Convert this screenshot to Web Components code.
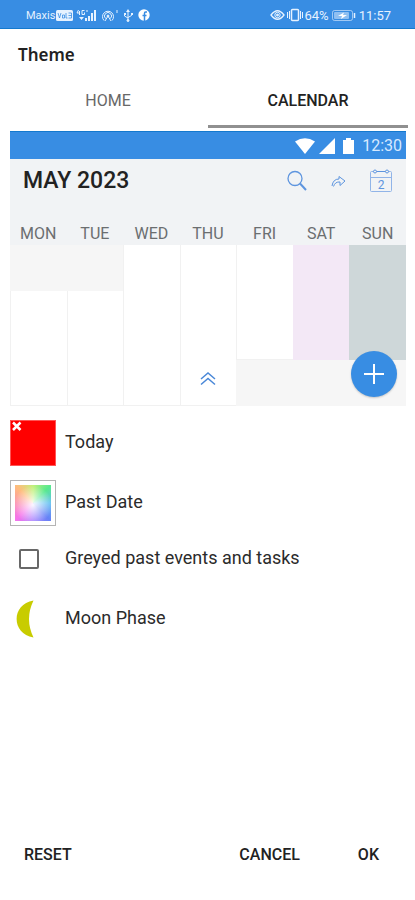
<!DOCTYPE html>
<html lang="en">
<head>
<meta charset="utf-8">
<meta name="viewport" content="width=device-width, initial-scale=1">
<title>Theme</title>
<style>
html, body { margin: 0; background: #fff; }
body { font-family: Roboto, "Noto Sans", sans-serif; color: #222; --blue: #388de3; }
</style>
</head>
<body>
<theme-screen></theme-screen>
<script>
const define = (name, html, setup) => {
  const template = document.createElement("template");
  template.innerHTML = html;
  customElements.define(name, class extends HTMLElement {
    constructor() {
      super();
      this.attachShadow({ mode: "open" }).append(template.content.cloneNode(true));
    }
    connectedCallback() { if (setup) setup(this, this.shadowRoot); }
  });
};

define("status-bar", `
<style>
:host { display: flex; justify-content: space-between; align-items: center; height: 29px; box-sizing: border-box; padding: 2px 24px 0 26px; background: var(--blue); border-bottom: 1px solid #1479ce; color: #e6f2ff; }
div { display: flex; align-items: center; }
.left { font-size: 11px; }
.right { font-size: 13px; }
svg { display: block; fill: none; stroke: currentColor; }
.volte { margin-left: 1px; }
.net { margin-left: 3px; }
.spot { margin-left: 4px; }
.usb { margin-left: 4px; }
.fb { margin-left: 5px; }
.vib { margin: 0 1px 0 2px; }
.bat { margin: 0 3px; }
</style>
<div class="left">
  <span>Maxis</span>
  <svg class="volte" width="17" height="11" viewBox="0 0 17 11"><rect width="17" height="11" rx="1.500" fill="currentColor" stroke="none"/><path d="M2 3l1.500 5 1.500-5M6.500 5h2v3h-2zM10 3v5h1.500M12.500 3h3v5h-3M12.500 5.500h3" stroke="#388de3" stroke-width=".8"/></svg>
  <svg class="net" width="21" height="13" viewBox="0 0 21 13"><path d="M2.500 1L1 4h3M3.500 2v4M8.500 1.500H6v4h2.500v-2M10 2h2" stroke-width="1"/><path d="M3 8h5L5.500 11zM9 9h2v3H9zM12 7h2v5h-2zM15 4h2v8h-2zM18 1h2v11h-2z" fill="currentColor" stroke="none"/></svg>
  <svg class="spot" width="18" height="13" viewBox="0 0 18 13"><path d="M3 11.500A5.500 5.500 0 1 1 11 11.500M4.500 9.500A3.500 3.500 0 1 1 9.500 9.500M4 12l3-5 3 5M16 1v3"/><circle cx="7" cy="7" r="1" fill="currentColor"/></svg>
  <svg class="usb" width="10" height="13" viewBox="0 0 10 13"><path d="M5 2v9M1.500 5v2L5 9M8.500 4.500v2L5 8.500"/><path d="M5 0L3 3h4zM1 4h2v2H1zM8 4h2v2H8z" fill="currentColor" stroke="none"/><circle cx="5" cy="11.500" r="1" fill="currentColor"/></svg>
  <svg class="fb" width="12" height="12" viewBox="0 0 12 12"><circle cx="6" cy="6" r="5.700" fill="#fff" stroke="none"/><path d="M9 3H7.500Q6.500 3 6.500 4.200V12M4.500 6.500h4" stroke="#388de3" stroke-width="1.500"/></svg>
</div>
<div class="right">
  <svg width="15" height="12" viewBox="0 0 15 12"><path d="M1 6Q7.500-2.500 14 6 7.500 14.500 1 6z" stroke-width="1.300"/><circle cx="7.500" cy="6" r="2.700"/><circle cx="7.500" cy="6" r="1" fill="currentColor"/></svg>
  <svg class="vib" width="16" height="14" viewBox="0 0 16 14"><rect x="4.500" y="1.500" width="7" height="11" rx="1" stroke-width="1.500"/><path d="M2.500 3v8M13.500 3v8M.5 4v6M15.500 4v6"/></svg>
  <span>64%</span>
  <svg class="bat" width="24" height="11" viewBox="0 0 24 11"><rect x=".5" y=".5" width="20" height="10" rx="2" opacity=".6"/><rect x="2" y="2" width="15" height="7" rx="1" fill="currentColor" stroke="none" opacity=".5"/><path d="M6 6l6-3.500-1 2.500h4L9 9l1-3z" fill="#fff" stroke="none"/><path d="M22.500 3v5" stroke-width="1.500"/></svg>
  <span>11:57</span>
</div>`);

define("theme-tabs", `
<style>
:host { display: grid; grid-template-columns: 1fr 1fr; height: 52px; margin: 0 7px 0 8px; }
button { font: 400 16px Roboto, sans-serif; color: #686868; background: none; border: 0; border-bottom: 3px solid transparent; padding: 0; height: 52px; }
button[aria-selected=true] { color: #222; font-weight: 500; border-bottom-color: #909090; }
</style>
<button role="tab" aria-selected="false">HOME</button>
<button role="tab" aria-selected="true">CALENDAR</button>`,
(el, root) => {
  const tabs = root.querySelectorAll("button");
  tabs.forEach(t => t.onclick = () => tabs.forEach(o => o.setAttribute("aria-selected", o === t)));
});

define("day-column", `
<style>
:host { display: flex; flex-direction: column; min-width: 0; }
.name { height: 26px; line-height: 29px; text-align: center; font-size: 16px; color: #6b6e70; }
.cells { flex: 1; background: #f6f6f6; display: flex; flex-direction: column; }
.fill { flex: 1; box-sizing: border-box; background: var(--fill, #fff); border: solid #f1f1f1; border-width: var(--lines, 0 0 1px 1px); margin: var(--inset, 0); display: flex; align-items: flex-end; justify-content: center; }
</style>
<div class="name"></div>
<div class="cells"><div class="fill"><slot></slot></div></div>`,
(el, root) => { root.querySelector(".name").textContent = el.getAttribute("name"); });

define("calendar-preview", `
<style>
:host { display: block; position: relative; margin: 3px 9px 0 10px; background: #f1f3f5; }
svg { display: block; fill: none; stroke: #5e95df; }
.bar { height: 28px; box-sizing: border-box; border-top: 1px solid #1479ce; padding: 0 4px; background: var(--blue); color: #d6e9ff; display: flex; align-items: center; justify-content: flex-end; gap: 8px; font-size: 16px; }
.bar svg { fill: #fff; stroke: none; }
.bar .wifi { margin-right: -4px; }
.head { display: flex; align-items: center; height: 44px; padding: 0 14px 0 13px; }
h2 { flex: 1; margin: 0; font-size: 23px; line-height: 28px; font-weight: 500; color: #222; }
.head button { background: none; border: 0; padding: 0; }
.tools { display: flex; align-items: center; gap: 24px; height: 24px; }
.tools svg text { font: 12px Roboto, sans-serif; fill: #5e95df; stroke: none; }
.week { display: grid; grid-template-columns: repeat(7, 1fr); height: 187px; padding-top: 16px; }
.late { --inset: 46px 0 0; }
.early { --inset: 0 0 46px; }
.sat { --fill: #f3e8f6; --lines: 0; }
.sun { --fill: #ced7d9; --lines: 0; }
.up { stroke: #4a88d8; margin-bottom: 19px; }
.add { position: absolute; right: 9px; bottom: 9px; width: 46px; height: 46px; border: 0; padding: 0; border-radius: 50%; background: var(--blue); box-shadow: 0 1px 2px #0003; display: grid; place-items: center; }
.add svg { stroke: #fff; stroke-width: 2; }
</style>
<div class="bar">
  <svg class="wifi" width="20" height="16" viewBox="0 0 20 16"><path d="M0 3.500Q10-3 20 3.500L10 16z"/></svg>
  <svg width="16" height="16" viewBox="0 0 16 16"><path d="M16 0v16H0z"/></svg>
  <svg width="11" height="16" viewBox="0 0 11 16"><path d="M3 0h5v2h3v14H0V2h3z"/></svg>
  <span>12:30</span>
</div>
<div class="head">
  <h2>MAY 2023</h2>
  <div class="tools">
    <button aria-label="Search"><svg width="20" height="22" viewBox="0 0 20 22"><circle cx="8" cy="8.500" r="7" stroke-width="1.300"/><path d="M13 13.500l6 6.500" stroke-width="2"/></svg></button>
    <button aria-label="Share"><svg width="15" height="13" viewBox="0 0 15 13"><path d="M1 11Q2 4 8 4V1.500L14 6l-5 4.500V7Q4 6.500 2.500 11.500"/></svg></button>
    <button aria-label="Go to date"><svg width="22" height="24" viewBox="0 0 22 24"><rect x=".5" y="2.500" width="21" height="20" rx="1" stroke="#91b4e8"/><path d="M.5 8.500h21" stroke="#91b4e8"/><path d="M7 2.500h8" /><circle cx="5" cy="2.500" r="1.500" fill="#f1f3f5"/><circle cx="17" cy="2.500" r="1.500" fill="#f1f3f5"/><text x="11" y="20" text-anchor="middle">2</text></svg></button>
  </div>
</div>
<div class="week">
  <day-column class="late" name="MON"></day-column>
  <day-column class="late" name="TUE"></day-column>
  <day-column name="WED"></day-column>
  <day-column name="THU"><svg class="up" width="16" height="15" viewBox="0 0 16 15"><path d="M1 8l7-6 7 6M1 13.500l7-6 7 6" stroke-width="1.500"/></svg></day-column>
  <day-column class="early" name="FRI"></day-column>
  <day-column class="early sat" name="SAT"></day-column>
  <day-column class="early sun" name="SUN"></day-column>
</div>
<button class="add" aria-label="Add"><svg width="20" height="20" viewBox="0 0 20 20"><path d="M10 0v20M0 10h20"/></svg></button>`);

define("option-row", `
<style>
:host { display: block; }
label { display: grid; grid-template-columns: 46px 1fr; column-gap: 9px; align-items: center; height: 60px; padding: 0 10px; font-size: 18px; line-height: 24px; color: #2b2b2b; }
.text { padding-bottom: 2px; }
</style>
<label><slot name="control"></slot><span class="text"></span></label>`,
(el, root) => {
  root.querySelector(".text").textContent = el.getAttribute("text");
});

define("theme-options", `
<style>
:host { display: block; padding-top: 7px; }
button { display: block; width: 46px; height: 46px; padding: 0; border: 0; box-sizing: border-box; }
svg { display: block; }
.today { display: flex; align-items: flex-start; background: #f00; border: 1px solid #f55; }
.past { background: #fff; border: 1px solid #b4b4b4; padding: 4px; }
.past span { display: block; height: 36px; background: radial-gradient(circle at 50% 55%, #fffffff2, #ffffff26 72%), conic-gradient(from 45deg, #3be57a, #48b6ef 45deg, #4b6cf5 90deg, #9a6bff 135deg, #f45ce8 180deg, #fb7fa0 225deg, #ffb066 270deg, #b7ee62 315deg, #3be57a); }
.moon { margin-left: 6px; }
input { appearance: none; width: 20px; height: 20px; margin: 0 0 0 9px; border: 2px solid #686868; border-radius: 2px; }
input:checked { background: #686868; }
.tick { margin: -4px 0 0; }
</style>
<option-row text="Today"><button slot="control" class="today" aria-label="Today colour"><svg width="13" height="12" viewBox="0 0 13 12"><path d="M2 1.500l7.500 7.500M9.500 1.500L2 9" stroke="#fff" stroke-width="2.500"/></svg></button></option-row>
<option-row text="Past Date"><button slot="control" class="past" aria-label="Past date colour"><span></span></button></option-row>
<option-row class="tick" text="Greyed past events and tasks"><input slot="control" type="checkbox" aria-label="Greyed past events and tasks"></option-row>
<option-row text="Moon Phase"><svg slot="control" class="moon" width="19" height="38" viewBox="0 0 19 38"><path d="M17.500 .5Q8.500 19 17.500 37.500C-5 34-5 4 17.500 .5z" fill="#c8cc00"/></svg></option-row>`);

define("action-bar", `
<style>
:host { display: flex; align-items: center; padding: 0 36px 25px 24px; }
button { font: 500 16px/40px Roboto, sans-serif; color: #222; background: none; border: 0; padding: 0; }
.gap { flex: 1; }
.ok { margin-left: 58px; }
</style>
<button>RESET</button><span class="gap"></span><button>CANCEL</button><button class="ok">OK</button>`);

define("theme-screen", `
<style>
:host { display: flex; flex-direction: column; min-height: 100vh; }
h1 { margin: 0; padding: 13px 18px 8px; font: 600 17px/26px "Noto Sans", sans-serif; color: #222; }
theme-options { flex: 1; }
</style>
<status-bar></status-bar>
<h1>Theme</h1>
<theme-tabs role="tablist"></theme-tabs>
<calendar-preview></calendar-preview>
<theme-options></theme-options>
<action-bar></action-bar>`);
</script>
</body>
</html>
